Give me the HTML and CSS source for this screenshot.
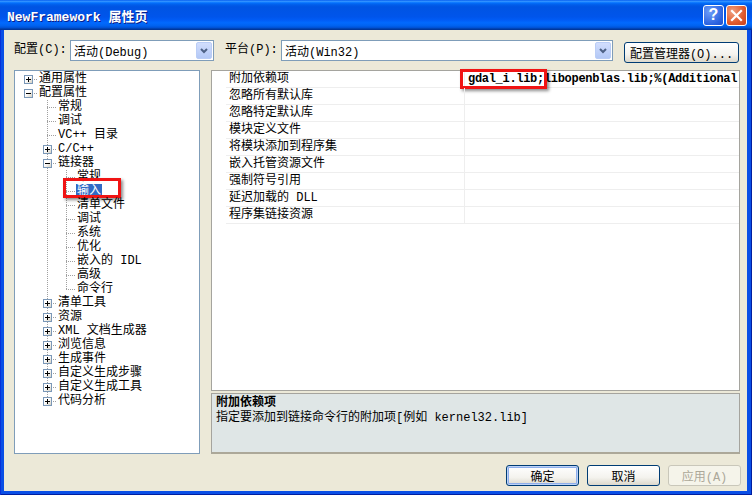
FILE: index.html
```html
<!DOCTYPE html>
<html lang="zh-CN">

<head>
    <meta charset="UTF-8">
    <title>NewFramework 属性页</title>
    <link rel="stylesheet" href="styles.css">
</head>

<body>

    <div class="window">
        <div class="titlebar">
            <span class="title">NewFramework 属性页</span>
            <div class="caption-btns">
                <span class="cap-btn help">?</span>
                <span class="cap-btn close">
                    <svg width="13" height="13" viewBox="0 0 13 13">
                        <path d="M2 2 L11 11 M11 2 L2 11" stroke="#fff" stroke-width="2.2" stroke-linecap="square" fill="none"/>
                    </svg>
                </span>
            </div>
        </div>

        <div class="client">
            <div class="toolbar">
                <label class="lbl">配置(C):</label>
                <div class="combo combo-config">
                    <span>活动(Debug)</span>
                    <span class="drop"><svg width="8" height="6" viewBox="0 0 8 6"><path d="M1 1 L4 4 L7 1" stroke="#4D6185" stroke-width="2" fill="none"/></svg></span>
                </div>
                <label class="lbl lbl-platform">平台(P):</label>
                <div class="combo combo-platform">
                    <span>活动(Win32)</span>
                    <span class="drop"><svg width="8" height="6" viewBox="0 0 8 6"><path d="M1 1 L4 4 L7 1" stroke="#4D6185" stroke-width="2" fill="none"/></svg></span>
                </div>
                <button class="btn btn-mgr">配置管理器(O)...</button>
            </div>

            <div class="main">
                <div class="tree">
                    <div class="node lv0"><span class="exp plus"></span><span class="stub"></span><span class="txt">通用属性</span></div>
                    <div class="node lv0"><span class="exp minus"></span><span class="stub"></span><span class="txt">配置属性</span></div>
                    <div class="group g1">
                        <div class="node lv1"><span class="leaf"></span><span class="stub"></span><span class="txt">常规</span></div>
                        <div class="node lv1"><span class="leaf"></span><span class="stub"></span><span class="txt">调试</span></div>
                        <div class="node lv1"><span class="leaf"></span><span class="stub"></span><span class="txt">VC++ 目录</span></div>
                        <div class="node lv1"><span class="exp plus"></span><span class="stub"></span><span class="txt">C/C++</span></div>
                        <div class="node lv1"><span class="exp minus"></span><span class="stub"></span><span class="txt">链接器</span></div>
                        <div class="group g2">
                            <div class="node lv2"><span class="leaf"></span><span class="stub"></span><span class="txt">常规</span></div>
                            <div class="node lv2"><span class="leaf"></span><span class="stub"></span><span class="txt sel">输入</span><span class="mark mark-tree"></span></div>
                            <div class="node lv2"><span class="leaf"></span><span class="stub"></span><span class="txt">清单文件</span></div>
                            <div class="node lv2"><span class="leaf"></span><span class="stub"></span><span class="txt">调试</span></div>
                            <div class="node lv2"><span class="leaf"></span><span class="stub"></span><span class="txt">系统</span></div>
                            <div class="node lv2"><span class="leaf"></span><span class="stub"></span><span class="txt">优化</span></div>
                            <div class="node lv2"><span class="leaf"></span><span class="stub"></span><span class="txt">嵌入的 IDL</span></div>
                            <div class="node lv2"><span class="leaf"></span><span class="stub"></span><span class="txt">高级</span></div>
                            <div class="node lv2"><span class="leaf"></span><span class="stub"></span><span class="txt">命令行</span></div>
                        </div>
                        <div class="node lv1"><span class="exp plus"></span><span class="stub"></span><span class="txt">清单工具</span></div>
                        <div class="node lv1"><span class="exp plus"></span><span class="stub"></span><span class="txt">资源</span></div>
                        <div class="node lv1"><span class="exp plus"></span><span class="stub"></span><span class="txt">XML 文档生成器</span></div>
                        <div class="node lv1"><span class="exp plus"></span><span class="stub"></span><span class="txt">浏览信息</span></div>
                        <div class="node lv1"><span class="exp plus"></span><span class="stub"></span><span class="txt">生成事件</span></div>
                        <div class="node lv1"><span class="exp plus"></span><span class="stub"></span><span class="txt">自定义生成步骤</span></div>
                        <div class="node lv1"><span class="exp plus"></span><span class="stub"></span><span class="txt">自定义生成工具</span></div>
                        <div class="node lv1"><span class="exp plus"></span><span class="stub"></span><span class="txt">代码分析</span></div>
                    </div>
                </div>

                <div class="side">
                    <div class="grid">
                        <div class="prow">
                            <span class="gutter"></span>
                            <span class="pname">附加依赖项</span>
                            <span class="pval">gdal_i.lib;libopenblas.lib;%(Additional</span>
                            <span class="mark mark-grid"></span>
                        </div>
                        <div class="prow"><span class="gutter"></span><span class="pname">忽略所有默认库</span><span class="pval"></span></div>
                        <div class="prow"><span class="gutter"></span><span class="pname">忽略特定默认库</span><span class="pval"></span></div>
                        <div class="prow"><span class="gutter"></span><span class="pname">模块定义文件</span><span class="pval"></span></div>
                        <div class="prow"><span class="gutter"></span><span class="pname">将模块添加到程序集</span><span class="pval"></span></div>
                        <div class="prow"><span class="gutter"></span><span class="pname">嵌入托管资源文件</span><span class="pval"></span></div>
                        <div class="prow"><span class="gutter"></span><span class="pname">强制符号引用</span><span class="pval"></span></div>
                        <div class="prow"><span class="gutter"></span><span class="pname">延迟加载的 DLL</span><span class="pval"></span></div>
                        <div class="prow"><span class="gutter"></span><span class="pname">程序集链接资源</span><span class="pval"></span></div>
                    </div>
                    <div class="desc">
                        <div class="desc-title">附加依赖项</div>
                        <div class="desc-text">指定要添加到链接命令行的附加项[例如 kernel32.lib]</div>
                    </div>
                </div>
            </div>

            <div class="footer">
                <button class="btn btn-default">确定</button>
                <button class="btn">取消</button>
                <button class="btn" disabled>应用(A)</button>
            </div>
        </div>
    </div>

</body>

</html>
```

FILE: styles.css
```css
* {
    box-sizing: border-box;
}

body {
    margin: 0;
    font-family: "Liberation Mono", "Noto Sans CJK SC", monospace;
    font-size: 12px;
    color: #000;
    background: #fff;
}

/* window frame */

.window {
    width: 752px;
    height: 495px;
    display: flex;
    flex-direction: column;
    background: #0A4FE6;
    box-shadow: inset 1px 0 0 #0831D9, inset -1px 0 0 #001EA0, inset 0 -1px 0 #001EA0;
}

.titlebar {
    height: 30px;
    flex: none;
    display: flex;
    align-items: center;
    justify-content: space-between;
    padding: 0 5px 0 7px;
    background: linear-gradient(to bottom, #0058EE 0%, #3593FF 4%, #288EFF 6%, #127DFF 8%, #036FFC 10%, #0262EE 14%, #0057E5 20%, #0054E3 24%, #0055EB 56%, #005BF5 66%, #026AFE 76%, #0062EF 86%, #0052D6 92%, #0040AB 96%, #003092 100%);
}

.title {
    color: #fff;
    font-weight: bold;
    font-size: 13px;
    text-shadow: 1px 1px 0 #0A1E8A;
}

.caption-btns {
    display: flex;
    gap: 2px;
}

.cap-btn {
    width: 21px;
    height: 21px;
    border: 1px solid #fff;
    border-radius: 3px;
    display: flex;
    align-items: center;
    justify-content: center;
}

.help {
    background: radial-gradient(circle at 30% 30%, #6E9DF8, #2A62E0 70%, #2150C8);
    color: #fff;
    font: bold 16px "Liberation Sans", sans-serif;
}

.close {
    background: radial-gradient(circle at 30% 30%, #F0A080, #E05A2C 60%, #C7401C);
}

/* client area */

.client {
    flex: 1;
    margin: 0 5px 4px 4px;
    background: #ECE9D8;
    padding: 10px 7px 0 10px;
    display: flex;
    flex-direction: column;
}

.toolbar {
    display: flex;
    align-items: flex-start;
    height: 21px;
}

.lbl {
    width: 56px;
    line-height: 21px;
}

.lbl-platform {
    margin-left: 11px;
}

.combo {
    height: 21px;
    border: 1px solid #7F9DB9;
    background: #fff;
    display: flex;
    align-items: center;
    justify-content: space-between;
    padding-left: 3px;
}

.combo-config {
    width: 144px;
}

.combo-platform {
    width: 332px;
}

.drop {
    width: 16px;
    height: 17px;
    margin: 1px;
    border: 1px solid #BACDF6;
    border-radius: 2px;
    background: linear-gradient(#D2DEFD, #B3C8F6);
    display: flex;
    align-items: center;
    justify-content: center;
}

.btn {
    width: 73px;
    height: 21px;
    padding: 0;
    font-family: inherit;
    font-size: 12px;
    color: #000;
    border: 1px solid #003C74;
    border-radius: 3px;
    background: linear-gradient(#FFFFFF, #F4F3EE 60%, #DCD8CC);
}

.btn-mgr {
    width: 115px;
    margin-left: 11px;
    margin-top: 2px;
}

.btn-default {
    box-shadow: inset 0 0 0 1px #BCD2F7, inset 0 0 0 2px #8EAEEB;
}

.btn:disabled {
    color: #ACA899;
    border-color: #C9C7BA;
    background: #F5F4EA;
}

/* tree + property grid */

.main {
    display: flex;
    gap: 11px;
    height: 384px;
    margin-top: 9px;
}

.tree {
    width: 186px;
    flex: none;
    border: 1px solid #7F9DB9;
    background: #fff;
    padding-top: 1px;
}

.node {
    position: relative;
    display: flex;
    align-items: center;
    height: 14px;
}

.lv0 {
    padding-left: 9px;
}

.lv1 {
    padding-left: 28px;
}

.lv2 {
    padding-left: 47px;
}

.exp {
    position: relative;
    width: 9px;
    height: 9px;
    border: 1px solid #7B98B8;
    background: linear-gradient(135deg, #fff 40%, #D6D2C4);
}

.exp::before {
    content: "";
    position: absolute;
    left: 1px;
    top: 3px;
    width: 5px;
    height: 1px;
    background: #000;
}

.plus::after {
    content: "";
    position: absolute;
    left: 3px;
    top: 1px;
    width: 1px;
    height: 5px;
    background: #000;
}

.leaf {
    width: 9px;
    height: 1px;
    background: repeating-linear-gradient(to right, #A0A0A0 0 1px, transparent 1px 2px) no-repeat 4px 0 / 5px 1px;
}

.stub {
    width: 5px;
    height: 1px;
    background: repeating-linear-gradient(to right, transparent 0 1px, #A0A0A0 1px 2px);
}

.txt {
    padding: 0 1px;
    line-height: 14px;
    white-space: nowrap;
}

.txt.sel {
    background: #316AC5;
    color: #fff;
}

.group {
    background: repeating-linear-gradient(to bottom, #A0A0A0 0 1px, transparent 1px 2px) no-repeat;
    background-size: 1px calc(100% - 7px);
}

.g1 {
    background-position: 32px 0;
}

.g2 {
    background-position: 51px 0;
}

.mark {
    position: absolute;
    border: 3px solid #F01414;
    box-shadow: 2px 2px 3px rgba(0, 0, 0, 0.45);
}

.mark-tree {
    left: 48px;
    top: -6px;
    width: 58px;
    height: 20px;
}

.mark-grid {
    left: 248px;
    top: -2px;
    width: 87px;
    height: 20px;
}

.side {
    flex: 1;
    display: flex;
    flex-direction: column;
    gap: 2px;
}

.grid {
    height: 321px;
    border: 1px solid #A5A49E;
    background: #fff;
}

.prow {
    position: relative;
    display: grid;
    grid-template-columns: 14px 239px 1fr;
    height: 17px;
}

.pname,
.pval {
    border-bottom: 1px solid #EEEEEE;
    padding-left: 3px;
    line-height: 16px;
    white-space: nowrap;
    overflow: hidden;
}

.pname {
    border-right: 1px solid #EEEEEE;
}

.pval {
    font-weight: bold;
    letter-spacing: -0.3px;
}

.desc {
    height: 61px;
    background: #DFE6E6;
    border: 1px solid #A5A49E;
    border-bottom: 2px solid #ACA899;
    padding: 2px 4px;
    line-height: 15px;
}

.desc-title {
    font-weight: bold;
}

.footer {
    display: flex;
    justify-content: flex-end;
    gap: 8px;
    margin-top: 11px;
    margin-right: -1px;
}
```
